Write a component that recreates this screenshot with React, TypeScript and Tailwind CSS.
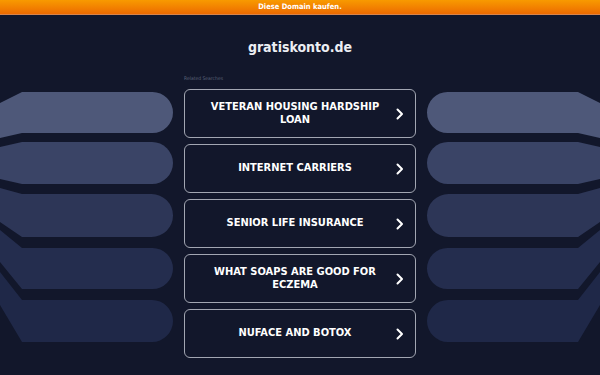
const items = [
  'VETERAN HOUSING HARDSHIP LOAN',
  'INTERNET CARRIERS',
  'SENIOR LIFE INSURANCE',
  'WHAT SOAPS ARE GOOD FOR ECZEMA',
  'NUFACE AND BOTOX',
];

// side "stacked bars" decoration: pill + slanted face toward the edge
const bars = [
  { t: 92, b: 133, t0: 103, b0: 138, c: '#4e5879' },
  { t: 142, b: 184, t0: 147, b0: 179, c: '#3a4466' },
  { t: 194, b: 237, t0: 188, b0: 222, c: '#2d3657' },
  { t: 248, b: 289, t0: 230, b0: 262, c: '#242d4e' },
  { t: 300, b: 342, t0: 272, b0: 305, c: '#1f2848' },
];

function SideBars({ flip }: { flip?: boolean }) {
  return (
    <svg
      width="184"
      height="303"
      viewBox="0 72 184 303"
      className={flip ? '-scale-x-100 shrink-0' : 'shrink-0'}
    >
      {bars.map((bar, i) => {
        const r = (bar.b - bar.t) / 2;
        return (
          <path
            key={i}
            fill={bar.c}
            d={`M0 ${bar.t0} L22 ${bar.t} L${173 - r} ${bar.t} A${r} ${r} 0 0 1 ${173 - r} ${bar.b} L22 ${bar.b} L0 ${bar.b0} Z`}
          />
        );
      })}
    </svg>
  );
}

function Chevron() {
  return (
    <svg width="8" height="12" viewBox="0 0 8 12" className="shrink-0">
      <path d="M1.5 1.5 L6 6 L1.5 10.5" fill="none" stroke="#ffffff" strokeWidth="2" strokeLinecap="round" strokeLinejoin="round" />
    </svg>
  );
}

export default function App() {
  return (
    <div
      className="w-full h-[375px] overflow-hidden bg-[#12172b] flex flex-col"
      style={{ fontFamily: '"DejaVu Sans Condensed", "DejaVu Sans", sans-serif' }}
    >
      <div className="h-[15px] shrink-0 bg-linear-to-b from-[#f89a00] to-[#ec6a00] border-b border-[#d8844a] flex items-center justify-center">
        <span className="text-[7.5px] font-bold text-white leading-none">Diese Domain kaufen.</span>
      </div>

      <h1 className="mt-[22px] h-[20px] leading-[20px] text-center text-[14px] font-bold text-[#eceef3]">
        gratiskonto.de
      </h1>

      <div className="mt-[15px] flex justify-center">
        <SideBars />
        <div className="w-[232px] shrink-0 flex flex-col">
          <p className="text-[5px] leading-[12px] text-[#5b6178] mb-[5px]">Related Searches</p>
          <div className="flex flex-col gap-[6px]">
            {items.map((item) => (
              <a
                key={item}
                href="#"
                className="h-[49px] flex items-center pl-4 pr-[11px] rounded-[6px] border-[1.5px] border-[#a2a6b2] text-white"
              >
                <span className="flex-1 text-center text-[11px] leading-[12.5px] font-bold">{item}</span>
                <span className="ml-[7px] mt-[1px]">
                  <Chevron />
                </span>
              </a>
            ))}
          </div>
        </div>
        <SideBars flip />
      </div>
    </div>
  );
}
